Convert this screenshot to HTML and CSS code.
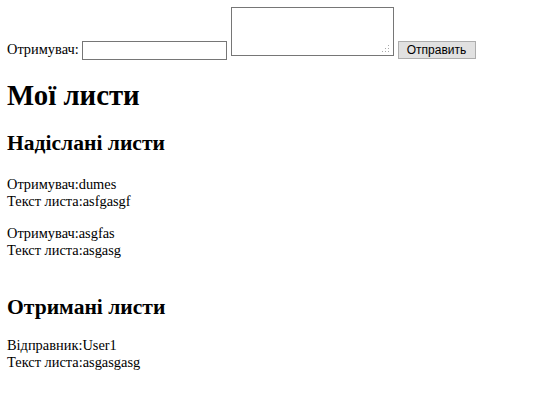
FILE: index.html
```html
<!DOCTYPE html>
<html>
<head>
<meta charset="utf-8">
<link rel="stylesheet" href="styles.css">
</head>
<body>
<form class="send-form">Отримувач: <input type="text" class="recipient"> <span class="ta-wrap"><textarea class="message"></textarea><svg class="grip" width="9" height="8" viewBox="0 0 9 8"><rect x="7" y="0" width="1" height="1"/><rect x="4" y="3" width="1" height="1"/><rect x="7" y="3" width="1" height="1"/><rect x="1" y="6" width="1" height="1"/><rect x="4" y="6" width="1" height="1"/><rect x="7" y="6" width="1" height="1"/></svg></span> <button type="button" class="send-btn">Отправить</button></form>
<h1>Мої листи</h1>
<section class="sent">
<h2>Надіслані листи</h2>
<p class="letter">Отримувач:dumes<br>Текст листа:asfgasgf</p>
<p class="letter">Отримувач:asgfas<br>Текст листа:asgasg</p>
</section>
<section class="received">
<h2>Отримані листи</h2>
<p class="letter">Відправник:User1<br>Текст листа:asgasgasg</p>
</section>
</body>
</html>
```
FILE: styles.css
```css
body {
  font-family: "Liberation Serif", "Times New Roman", serif;
  font-size: 14.4px;
  line-height: 17px;
  margin: 7px 8px 7px 7px;
  color: #000;
  background: #fff;
}
.send-form {
  margin: 0;
}
.recipient {
  box-sizing: border-box;
  width: 145px;
  height: 19px;
  margin: 0;
  padding: 0 2px;
  border: 1px solid #767676;
  font-family: "Liberation Sans", Arial, sans-serif;
  font-size: 12px;
  vertical-align: baseline;
}
.ta-wrap {
  display: inline-block;
  position: relative;
  vertical-align: -2px;
}
.message {
  display: block;
  box-sizing: border-box;
  width: 163px;
  height: 49px;
  margin: 0;
  padding: 2px;
  border: 1px solid #767676;
  resize: none;
  font-family: "Liberation Mono", monospace;
  font-size: 12px;
}
.grip {
  position: absolute;
  right: 4px;
  bottom: 3px;
  fill: #a8a8a8;
  pointer-events: none;
}
.send-btn {
  box-sizing: border-box;
  height: 18px;
  width: 78px;
  margin: 0;
  padding: 0;
  border: 1px solid #adadad;
  background: #e1e1e1;
  color: #000;
  font-family: "Liberation Sans", Arial, sans-serif;
  font-size: 12px;
  line-height: 14px;
}
h1, h2 {
  line-height: normal;
  font-weight: bold;
}
h1 {
  font-size: 2em;
  margin: 0.67em 0;
}
h2 {
  font-size: 1.5em;
  margin: 0.83em 0;
}
.sent h2 {
  margin-bottom: 20px;
}
.received h2 {
  margin-top: 36px;
  margin-bottom: 17px;
}
.letter {
  margin: 15px 0;
}
```
